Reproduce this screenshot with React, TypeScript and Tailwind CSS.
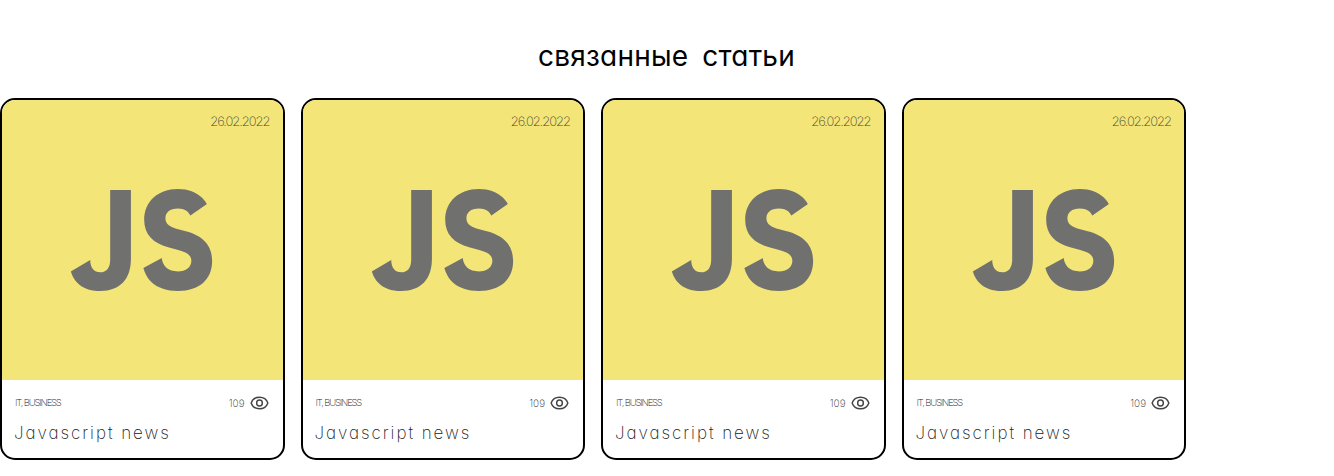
type Article = { id: number; date: string; tags: string; views: number; title: string };

const articles: Article[] = [1, 2, 3, 4].map((id) => ({
  id,
  date: "26.02.2022",
  tags: "IT, BUSINESS",
  views: 109,
  title: "Javascript news",
}));

function JsLogo({ id }: { id: number }) {
  const jClip = `j-terminal-${id}`;
  const sClip = `s-terminals-${id}`;
  return (
    <svg viewBox="0 0 281 280" className="block h-[280px] w-full" preserveAspectRatio="none" aria-label="JS">
      <defs>
        {/* Slanted cuts for the ends of the strokes */}
        <clipPath id={jClip}>
          <polygon points="102,80 135,80 135,195 60,195 68,172 85,162 102,152" />
        </clipPath>
        <clipPath id={sClip}>
          <polygon points="136,80 214,80 214,98 188,116 178,122 214,122 214,195 136,195 136,171 162,157 162,152 136,152" />
        </clipPath>
      </defs>
      <g fill="#70706f" fontFamily="Inter, sans-serif" fontWeight={800} fontSize={137}>
        <g clipPath={`url(#${jClip})`}>
          <text transform="translate(64 189.500) scale(0.89 1)">J</text>
        </g>
        <g clipPath={`url(#${sClip})`}>
          <text transform="translate(136 189.500) scale(0.87 1)">S</text>
        </g>
      </g>
    </svg>
  );
}

function EyeIcon() {
  return (
    <svg
      viewBox="0 0 20 14"
      className="mr-px h-[14px] w-[19px] text-[#444]"
      fill="none"
      stroke="currentColor"
      strokeWidth={1.5}
      preserveAspectRatio="none"
      aria-hidden="true"
    >
      <path d="M1.2 7C2.5 3.4 5.900 1.200 10 1.200S17.500 3.400 18.800 7C17.500 10.600 14.100 12.800 10 12.800S2.500 10.600 1.200 7Z" strokeLinejoin="round" />
      <circle cx="10" cy="7" r="3" />
    </svg>
  );
}

function ArticleCard({ article }: { article: Article }) {
  return (
    <article className="relative h-[362px] w-[284.5px] shrink-0 overflow-hidden rounded-[15px] border-2 border-black bg-white">
      <div className="bg-[#f3e577]">
        <JsLogo id={article.id} />
      </div>
      <time className="absolute top-[12px] right-[13px] text-[13px] leading-[18px] font-extralight tracking-[-1.05px] text-[#4d4a35]">
        {article.date}
      </time>
      <div className="flex h-[46px] items-center justify-between px-[13px]">
        <span className="text-[9.5px] font-extralight tracking-[-1.15px] text-[#222]">{article.tags}</span>
        <span className="flex items-center gap-[5px]">
          <span className="text-[10px] font-extralight tracking-[0px] text-[#222]">{article.views}</span>
          <EyeIcon />
        </span>
      </div>
      <h3 className="-mt-[5px] pl-[12px] text-[17px] leading-[24px] font-extralight tracking-[1.95px] text-[#222]">
        {article.title}
      </h3>
    </article>
  );
}

export default function App() {
  return (
    <section className="h-[476px] overflow-hidden bg-white font-['Inter',sans-serif] [font-feature-settings:'cv11']">
      <h2 className="pt-[36px] pr-px text-center text-[28px] leading-[40px] font-[400] tracking-[0.2px] text-black [word-spacing:6px]">
        связанные статьи
      </h2>
      <div className="mt-[22px] flex gap-4">
        {articles.map((article) => (
          <ArticleCard key={article.id} article={article} />
        ))}
      </div>
    </section>
  );
}
